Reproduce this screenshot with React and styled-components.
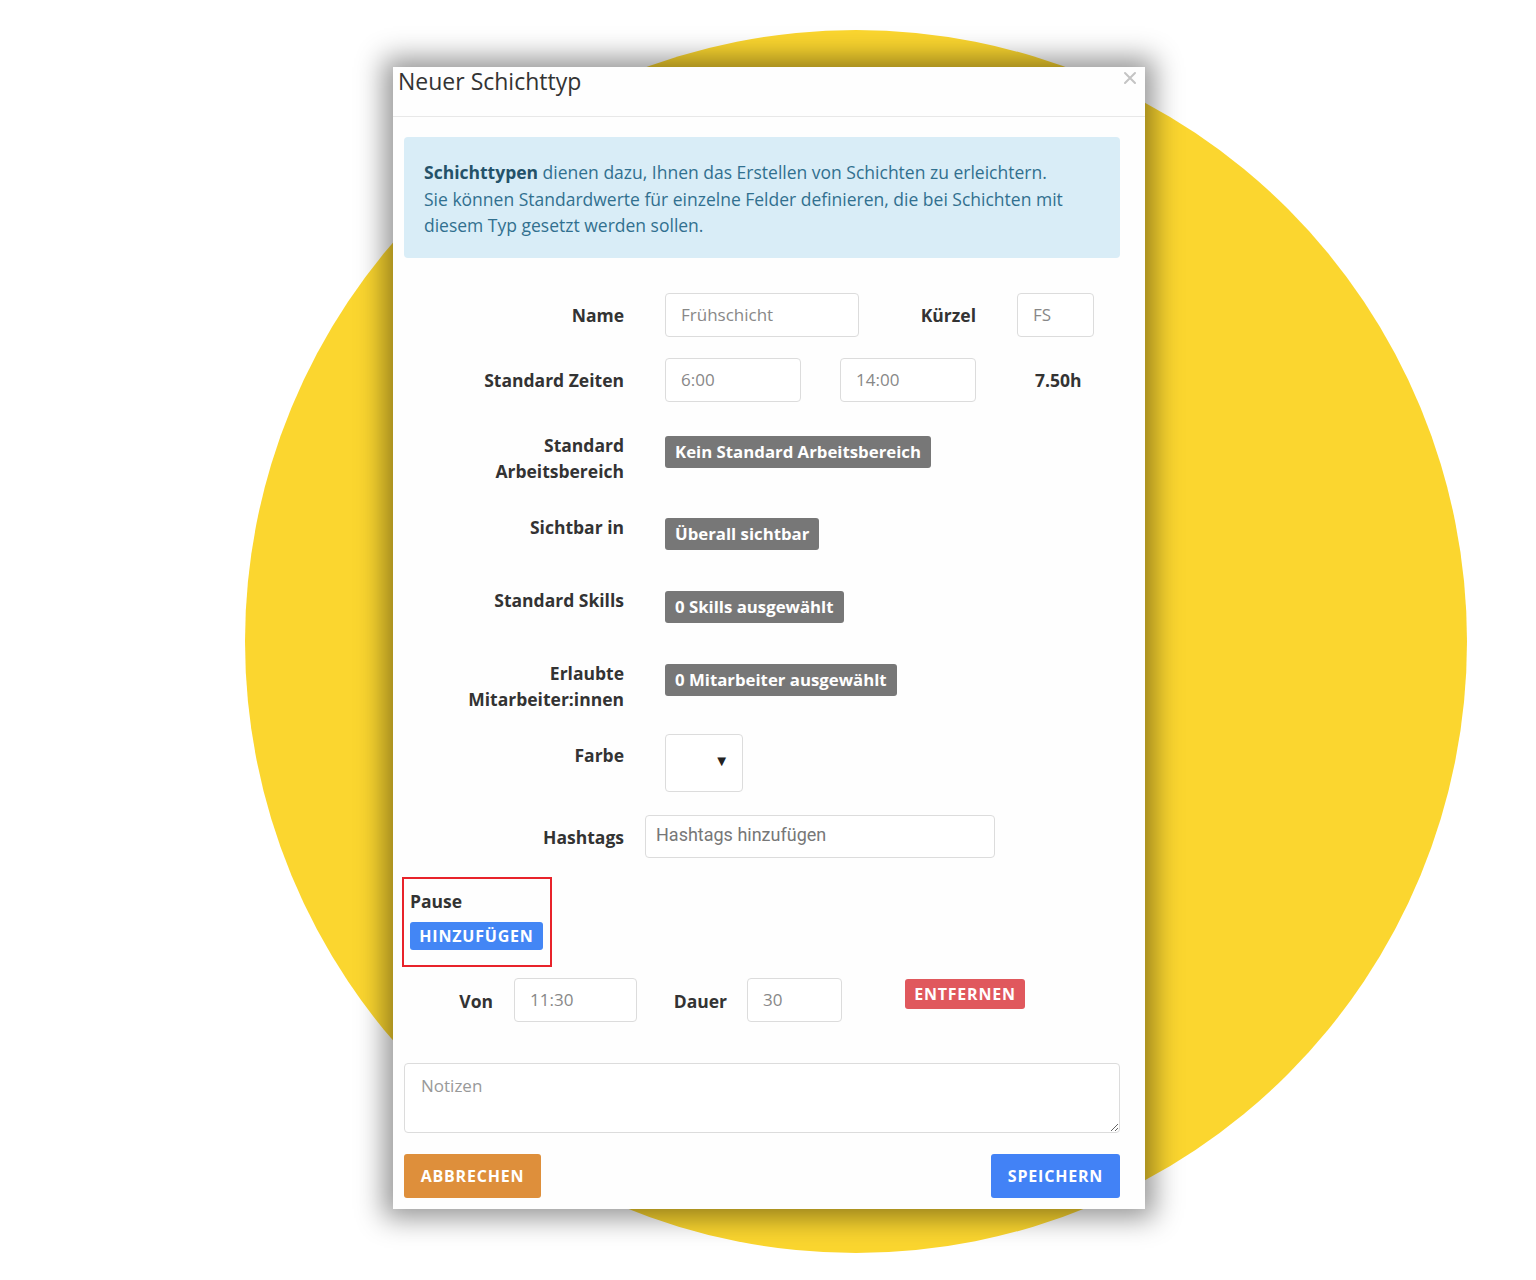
import React from "react";
import styled, { createGlobalStyle } from "styled-components";

const Global = createGlobalStyle`
  html, body { margin: 0; padding: 0; background: #ffffff; }
  body { font-family: "Open Sans", "Noto Sans", sans-serif; color: #333; }
  * { box-sizing: border-box; }
`;

const Stage = styled.div`
  position: relative;
  width: 1536px;
  height: 1280px;
  overflow: hidden;
  padding-top: 67px;
  padding-left: 393px;
  &::before {
    content: "";
    position: absolute;
    left: 245px;
    top: 30px;
    width: 1222px;
    height: 1223px;
    border-radius: 50%;
    background: #fbd62f;
  }
`;

const Dialog = styled.div`
  position: relative;
  z-index: 1;
  width: 752px;
  background: #fefefe;
  box-shadow: 0 0 26px 9px rgba(0, 0, 0, 0.42);
  padding-bottom: 11px;
`;

const Header = styled.div`
  height: 50px;
  border-bottom: 1px solid #e8e8e8;
  display: flex;
  justify-content: space-between;
  align-items: flex-start;
  padding: 0 8px 0 5px;
`;

const Title = styled.h4`
  margin: 0;
  font-size: 23px;
  line-height: 28px;
  font-weight: 400;
  color: #333;
`;

const Close = styled.button`
  border: none;
  background: none;
  padding: 0;
  margin-top: 4px;
  width: 14px;
  height: 14px;
  cursor: pointer;
  display: flex;
`;

const Body = styled.div`
  padding: 20px 25px 0 11px;
`;

const Info = styled.div`
  background: #d9edf7;
  border-radius: 4px;
  color: #31708f;
  font-size: 17.5px;
  line-height: 26.5px;
  padding: 22px 20px 19px;
  strong { color: #245269; font-weight: 700; }
`;

const Row = styled.div`
  display: flex;
  align-items: ${(p) => p.$align || "flex-start"};
  margin-top: ${(p) => p.$mt}px;
`;

const Label = styled.div`
  width: ${(p) => p.$w || 220}px;
  flex: none;
  text-align: right;
  font-weight: 700;
  font-size: 17.5px;
  line-height: 26px;
  color: #333;
  white-space: nowrap;
  padding-top: ${(p) => p.$pt || 0}px;
  margin-right: ${(p) => (p.$mr === undefined ? 41 : p.$mr)}px;
`;

const Input = styled.input`
  width: ${(p) => p.$w}px;
  height: ${(p) => p.$h || 44}px;
  flex: none;
  border: 1px solid #dcdcdc;
  border-radius: 4px;
  background: #fff;
  padding: 0 15px;
  font-family: "Open Sans", sans-serif;
  font-size: 17px;
  color: #888;
  margin-left: ${(p) => p.$ml || 0}px;
  outline: none;
  &::placeholder { color: #888; }
`;

const HashInput = styled(Input)`
  font-family: Roboto, "Liberation Sans", sans-serif;
  font-size: 18px;
  padding: 0 10px 4px;
  &::placeholder { color: #777; }
`;

const Total = styled.div`
  margin-left: 59px;
  font-weight: 700;
  font-size: 17.5px;
  color: #333;
`;

const GrayBtn = styled.button`
  height: 32px;
  margin-top: 4px;
  padding: 0 10px;
  background: #777;
  color: #fff;
  border: none;
  border-radius: 3px;
  font-family: "Open Sans", sans-serif;
  font-weight: 700;
  font-size: 16.8px;
  cursor: pointer;
`;

const ColorSelect = styled.div`
  width: 78px;
  height: 58px;
  border: 1px solid #dcdcdc;
  border-radius: 4px;
  background: #fff;
  display: flex;
  align-items: center;
  justify-content: flex-end;
  padding: 0 13px 6px 0;
  font-size: 15px;
  color: #222;
`;

const PauseBox = styled.div`
  display: inline-flex;
  flex-direction: column;
  align-items: flex-start;
  border: 2px solid #e8232a;
  margin-top: 19px;
  margin-left: -2px;
  padding: 10px 7px 15px 6px;
`;

const PauseLabel = styled.div`
  font-weight: 700;
  font-size: 17.5px;
  line-height: 24px;
  color: #333;
`;

const ActionBtn = styled.button`
  height: ${(p) => p.$h}px;
  width: ${(p) => p.$w}px;
  margin-top: ${(p) => p.$mt || 0}px;
  margin-left: ${(p) => p.$ml || 0}px;
  background: ${(p) => p.$bg};
  color: #fff;
  border: none;
  border-radius: 3px;
  font-family: "Open Sans", sans-serif;
  font-weight: 700;
  font-size: 16px;
  letter-spacing: 0.8px;
  text-transform: uppercase;
  padding: 0;
  cursor: pointer;
`;

const PauseRow = styled.div`
  display: flex;
  align-items: flex-start;
  margin-top: 11px;
`;

const InlineLabel = styled.div`
  width: ${(p) => p.$w}px;
  flex: none;
  text-align: right;
  font-weight: 700;
  font-size: 17.5px;
  line-height: 44px;
  padding-top: 1px;
  color: #333;
  margin-right: ${(p) => p.$mr}px;
`;

const Notes = styled.textarea`
  display: block;
  width: 100%;
  height: 70px;
  margin-top: 40px;
  border: 1px solid #dcdcdc;
  border-radius: 4px;
  padding: 10px 16px;
  font-family: "Open Sans", sans-serif;
  font-size: 17px;
  color: #555;
  background: #fff;
  outline: none;
  &::placeholder { color: #999; }
`;

const Footer = styled.div`
  display: flex;
  justify-content: space-between;
  margin-top: 21px;
`;

export default function App() {
  return (
    <>
      <Global />
      <Stage>
        <Dialog>
          <Header>
            <Title>Neuer Schichttyp</Title>
            <Close aria-label="close">
              <svg width="14" height="14" viewBox="0 0 14 14">
                <path d="M2 2 L12 12 M12 2 L2 12" stroke="#c4c4c4" strokeWidth="2" strokeLinecap="round" />
              </svg>
            </Close>
          </Header>
          <Body>
            <Info>
              <strong>Schichttypen</strong> dienen dazu, Ihnen das Erstellen von Schichten zu erleichtern.
              <br />
              Sie können Standardwerte für einzelne Felder definieren, die bei Schichten mit
              <br />
              diesem Typ gesetzt werden sollen.
            </Info>

            <Row $mt={35} $align="center">
              <Label>Name</Label>
              <Input $w={194} defaultValue="Frühschicht" />
              <Label $w={117}>Kürzel</Label>
              <Input $w={77} defaultValue="FS" />
            </Row>

            <Row $mt={21} $align="center">
              <Label>Standard Zeiten</Label>
              <Input $w={136} defaultValue="6:00" />
              <Input $w={136} $ml={39} defaultValue="14:00" />
              <Total>7.50h</Total>
            </Row>

            <Row $mt={30}>
              <Label>
                Standard
                <br />
                Arbeitsbereich
              </Label>
              <GrayBtn>Kein Standard Arbeitsbereich</GrayBtn>
            </Row>

            <Row $mt={30}>
              <Label>Sichtbar in</Label>
              <GrayBtn>Überall sichtbar</GrayBtn>
            </Row>

            <Row $mt={37}>
              <Label>Standard Skills</Label>
              <GrayBtn>0 Skills ausgewählt</GrayBtn>
            </Row>

            <Row $mt={37}>
              <Label>
                Erlaubte
                <br />
                Mitarbeiter:innen
              </Label>
              <GrayBtn>0 Mitarbeiter ausgewählt</GrayBtn>
            </Row>

            <Row $mt={22}>
              <Label $pt={8}>Farbe</Label>
              <ColorSelect>▼</ColorSelect>
            </Row>

            <Row $mt={23}>
              <Label $pt={9} $mr={21}>Hashtags</Label>
              <HashInput $w={350} $h={43} placeholder="Hashtags hinzufügen" />
            </Row>

            <PauseBox>
              <PauseLabel>Pause</PauseLabel>
              <ActionBtn $bg="#4386f5" $w={133} $h={28} $mt={9}>Hinzufügen</ActionBtn>
            </PauseBox>

            <PauseRow>
              <InlineLabel $w={89} $mr={21}>Von</InlineLabel>
              <Input $w={123} defaultValue="11:30" />
              <InlineLabel $w={90} $mr={20}>Dauer</InlineLabel>
              <Input $w={95} defaultValue="30" />
              <ActionBtn $bg="#e0585d" $w={120} $h={30} $mt={1} $ml={63}>Entfernen</ActionBtn>
            </PauseRow>

            <Notes placeholder="Notizen" />

            <Footer>
              <ActionBtn $bg="#de8f3b" $w={137} $h={44}>Abbrechen</ActionBtn>
              <ActionBtn $bg="#4282f6" $w={129} $h={44}>Speichern</ActionBtn>
            </Footer>
          </Body>
        </Dialog>
      </Stage>
    </>
  );
}
